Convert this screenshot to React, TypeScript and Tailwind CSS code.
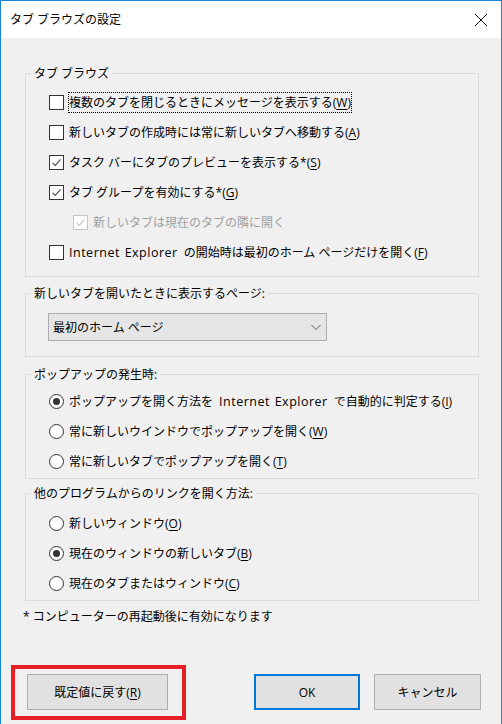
import React from "react";

const FONT = { fontFamily: '"Open Sans", "Noto Sans CJK JP", "Noto Sans", sans-serif' };

function Box({ checked = false, disabled = false }: { checked?: boolean; disabled?: boolean }) {
  return (
    <span
      className={
        disabled
          ? "w-[15px] h-[15px] border border-[#c4c4c4] bg-white flex items-center justify-center shrink-0"
          : "w-[15px] h-[15px] border border-[#333333] bg-white flex items-center justify-center shrink-0"
      }
    >
      {checked && (
        <svg width="13" height="13" viewBox="0 0 13 13">
          <path
            d="M2.5 6.8 L5.2 9.4 L10.6 3.4"
            stroke={disabled ? "#c6c6c6" : "#4a4a4a"}
            strokeWidth="1.1"
            fill="none"
          />
        </svg>
      )}
    </span>
  );
}

function Radio({ checked = false }: { checked?: boolean }) {
  return (
    <span className="w-[15px] h-[15px] rounded-full border border-[#333333] bg-white flex items-center justify-center shrink-0">
      {checked && <span className="w-[7px] h-[7px] rounded-full bg-[#333333]" />}
    </span>
  );
}

function Label({ children, focus = false, disabled = false }: { children: React.ReactNode; focus?: boolean; disabled?: boolean }) {
  return (
    <span
      className={
        (focus ? "border border-dotted border-black " : "border border-transparent ") +
        (disabled ? "text-[#a0a0a0] " : "text-black ") +
        "leading-[19px] whitespace-nowrap"
      }
    >
      {children}
    </span>
  );
}

function U({ children }: { children: React.ReactNode }) {
  return <span className="underline underline-offset-[2px]">{children}</span>;
}

function IE() {
  return <span className="text-[12.5px] tracking-[0.5px] [word-spacing:1px]">Internet Explorer</span>;
}

function Sp() {
  return <span className="inline-block w-[6px]" />;
}

function Group({ title, className, children }: { title: string; className: string; children: React.ReactNode }) {
  return (
    <div className={"relative w-[454px] border border-[#dcdcdc] " + className}>
      <span className="absolute left-[5px] -top-[10px] px-[3px] bg-[#f0f0f0] leading-[19px] text-black whitespace-nowrap">
        {title}
      </span>
      {children}
    </div>
  );
}

export default function App() {
  return (
    <div
      className="w-[502px] h-[724px] border-x border-t border-[#1883d7] bg-[#f0f0f0] text-[12px] text-black overflow-hidden"
      style={FONT}
    >
      {/* Title bar */}
      <div className="h-[37px] bg-white flex items-center justify-between pl-[9px] pr-[13px]">
        <span className="leading-[19px]">タブ ブラウズの設定</span>
        <svg width="14" height="14" viewBox="0 0 14 14">
          <path d="M1 1 L13 13 M13 1 L1 13" stroke="#111" strokeWidth="1" fill="none" />
        </svg>
      </div>

      {/* Body */}
      <div className="flex flex-col pl-[24px]">
        <Group title="タブ ブラウズ" className="mt-[35px] h-[204px] pt-[13px]">
          <div className="h-[30px] flex items-center gap-[4px] pl-[23px]">
            <Box />
            <Label focus>
              複数のタブを閉じるときにメッセージを表示する(<U>W</U>)
            </Label>
          </div>
          <div className="h-[30px] flex items-center gap-[4px] pl-[23px]">
            <Box />
            <Label>
              新しいタブの作成時には常に新しいタブへ移動する(<U>A</U>)
            </Label>
          </div>
          <div className="h-[30px] flex items-center gap-[4px] pl-[23px]">
            <Box checked />
            <Label>
              タスク バーにタブのプレビューを表示する*(<U>S</U>)
            </Label>
          </div>
          <div className="h-[30px] flex items-center gap-[4px] pl-[23px]">
            <Box checked />
            <Label>
              タブ グループを有効にする*(<U>G</U>)
            </Label>
          </div>
          <div className="h-[30px] flex items-center gap-[4px] pl-[47px]">
            <Box checked disabled />
            <Label disabled>新しいタブは現在のタブの隣に開く</Label>
          </div>
          <div className="h-[31px] flex items-center gap-[4px] pl-[23px]">
            <Box />
            <Label>
              <IE />
              <Sp />の開始時は最初のホーム ページだけを開く(<U>F</U>)
            </Label>
          </div>
        </Group>

        <Group title="新しいタブを開いたときに表示するページ:" className="mt-[16px] h-[64px] pt-[19px]">
          <div className="ml-[22px] w-[279px] h-[28px] border border-[#adadad] bg-[#e5e5e5] flex items-center justify-between pl-[4px] pr-[5px]">
            <span className="leading-[19px]">最初のホーム ページ</span>
            <svg width="10" height="7" viewBox="0 0 10 7">
              <path d="M0.5 1 L5 5.5 L9.5 1" stroke="#5a5a5a" strokeWidth="1" fill="none" />
            </svg>
          </div>
        </Group>

        <Group title="ポップアップの発生時:" className="mt-[17px] h-[105px] pt-[11px]">
          <div className="h-[30px] flex items-center gap-[4px] pl-[23px]">
            <Radio checked />
            <Label>
              ポップアップを開く方法を<Sp />
              <IE />
              <Sp />で自動的に判定する(<U>I</U>)
            </Label>
          </div>
          <div className="h-[30px] flex items-center gap-[4px] pl-[23px]">
            <Radio />
            <Label>
              常に新しいウインドウでポップアップを開く(<U>W</U>)
            </Label>
          </div>
          <div className="h-[30px] flex items-center gap-[4px] pl-[23px]">
            <Radio />
            <Label>
              常に新しいタブでポップアップを開く(<U>T</U>)
            </Label>
          </div>
        </Group>

        <Group title="他のプログラムからのリンクを開く方法:" className="mt-[14px] h-[108px] pt-[14px]">
          <div className="h-[30px] flex items-center gap-[4px] pl-[23px]">
            <Radio />
            <Label>
              新しいウィンドウ(<U>O</U>)
            </Label>
          </div>
          <div className="h-[30px] flex items-center gap-[4px] pl-[23px]">
            <Radio checked />
            <Label>
              現在のウィンドウの新しいタブ(<U>B</U>)
            </Label>
          </div>
          <div className="h-[30px] flex items-center gap-[4px] pl-[23px]">
            <Radio />
            <Label>
              現在のタブまたはウィンドウ(<U>C</U>)
            </Label>
          </div>
        </Group>

        <div className="mt-[7px] h-[18px] flex items-center -ml-[2px] leading-[18px]">
          * コンピューターの再起動後に有効になります
        </div>

        <div className="mt-[48px] flex items-start">
          <div className="relative ml-[2px]">
            <button className="w-[141px] h-[36px] border border-[#adadad] bg-[#e1e1e1] flex items-center justify-center leading-[19px]">
              既定値に戻す(<U>R</U>)
            </button>
            <div className="absolute -left-[16px] -top-[9px] w-[175px] h-[55px] border-[4px] border-[#e81f27] pointer-events-none" />
          </div>
          <button className="ml-[86px] w-[106px] h-[36px] border-2 border-[#0078d7] bg-[#e1e1e1] flex items-center justify-center leading-[19px]">
            OK
          </button>
          <button className="ml-[14px] w-[107px] h-[36px] border border-[#adadad] bg-[#e1e1e1] flex items-center justify-center leading-[19px]">
            キャンセル
          </button>
        </div>
      </div>
    </div>
  );
}
